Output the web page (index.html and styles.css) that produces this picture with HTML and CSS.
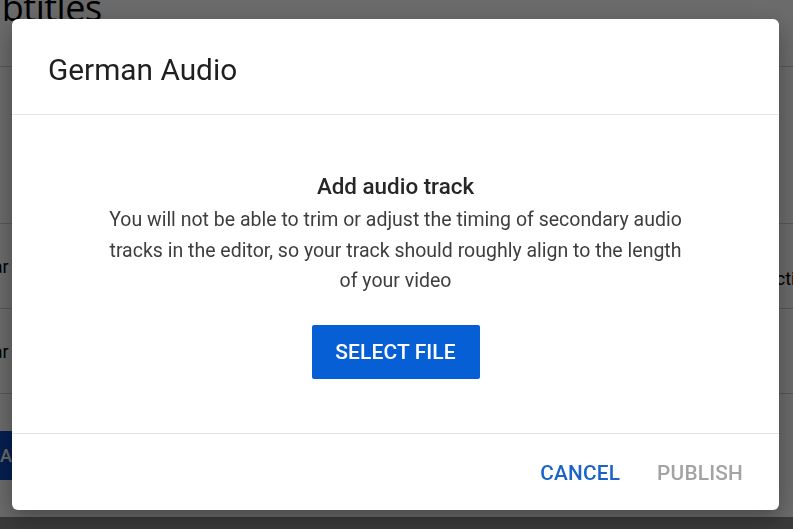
FILE: index.html
```html
<!DOCTYPE html>
<html lang="en">
<head>
<meta charset="utf-8">
<title>German Audio</title>
<link rel="stylesheet" href="styles.css">
</head>
<body>
  <div class="page">
    <h1 class="page-title">Subtitles</h1>
    <div class="table">
      <div class="row row-head"></div>
      <div class="row"><span class="cell-left">Sar</span><span class="cell-right">Actions</span></div>
      <div class="row"><span class="cell-left">Sar</span></div>
      <div class="row row-action"><span class="page-btn">ADD</span></div>
    </div>
    <div class="page-foot"></div>
  </div>

  <div class="scrim">
    <div class="dialog" role="dialog" aria-labelledby="dlg-title">
      <header class="dialog-head">
        <h2 id="dlg-title" class="dialog-title">German Audio</h2>
      </header>
      <section class="dialog-body">
        <h3 class="body-title">Add audio track</h3>
        <p class="body-text">You will not be able to trim or adjust the timing of secondary audio<br>tracks in the editor, so your track should roughly align to the length<br>of your video</p>
        <button class="btn-primary" type="button">SELECT FILE</button>
      </section>
      <footer class="dialog-foot">
        <button class="btn-text btn-cancel" type="button">CANCEL</button>
        <button class="btn-text btn-disabled" type="button" disabled>PUBLISH</button>
      </footer>
    </div>
  </div>
</body>
</html>
```
FILE: styles.css
```css
* { box-sizing: border-box; }

html, body {
  margin: 0;
  height: 100%;
}

body {
  font-family: Roboto, "Liberation Sans", Arial, sans-serif;
  background: #ffffff;
  overflow: hidden;
}

/* underlying page */
.page {
  height: 100%;
  display: flex;
  flex-direction: column;
  background: #ffffff;
  overflow: hidden;
}

.page-title {
  margin: -14px 0 0 -39px;
  font-family: "Open Sans", sans-serif;
  font-weight: 400;
  font-size: 36px;
  line-height: 44px;
  color: #000;
  letter-spacing: -0.5px;
}

.table {
  flex: 1;
  display: flex;
  flex-direction: column;
}

.row {
  border-top: 1px solid #cfcfcf;
  display: flex;
  align-items: center;
  justify-content: space-between;
  height: 85px;
  font-size: 18px;
  color: #000;
}

.row-head {
  margin-top: 36px;
  height: 157px;
}

.cell-left { margin-left: -18px; }
.cell-right { margin-right: -32px; margin-top: 24px; }

.row-action {
  height: 124px;
  align-items: flex-start;
  padding-top: 37px;
}

.page-btn {
  background: #0d47c0;
  color: #fff;
  font-weight: 500;
  padding: 14px 18px;
  margin-left: -18px;
}

.page-foot {
  height: 12px;
  background: #8a8a8a;
}

/* modal scrim and dialog */
.scrim {
  position: fixed;
  inset: 0;
  background: rgba(0, 0, 0, 0.58);
  display: flex;
  align-items: center;
  justify-content: center;
  padding-right: 2px;
}

.dialog {
  width: 767px;
  height: 491px;
  background: #ffffff;
  border-radius: 6px;
  display: flex;
  flex-direction: column;
  box-shadow: 0 8px 24px rgba(0, 0, 0, 0.35);
}

.dialog-head {
  height: 96px;
  border-bottom: 1px solid #e6e6e6;
  display: flex;
  align-items: center;
  padding: 5px 36px 0;
}

.dialog-title {
  margin: 0;
  font-size: 29.8px;
  font-weight: 400;
  color: #1f1f1f;
}

.dialog-body {
  flex: 1;
  display: flex;
  flex-direction: column;
  align-items: center;
  padding-top: 56px;
  border-bottom: 1px solid #e2e2e2;
  text-align: center;
}

.body-title {
  margin: 0;
  font-size: 22.4px;
  line-height: 30px;
  font-weight: 500;
  color: #262626;
}

.body-text {
  margin: 4px 0 0;
  font-size: 19.5px;
  line-height: 30.5px;
  color: #3e3e3e;
}

.btn-primary {
  margin-top: 28px;
  width: 168px;
  height: 54px;
  border: 0;
  border-radius: 2px;
  background: #065fd4;
  color: #ffffff;
  font-family: inherit;
  font-size: 21px;
  font-weight: 500;
  letter-spacing: 0.1px;
}

.dialog-foot {
  height: 76px;
  display: flex;
  align-items: center;
  justify-content: flex-end;
  gap: 37px;
  padding: 2px 36px 0;
}

.btn-text {
  border: 0;
  background: none;
  padding: 0;
  font-family: inherit;
  font-size: 20.8px;
  font-weight: 500;
  letter-spacing: 0.2px;
}

.btn-cancel { color: #1b63c6; }
.btn-disabled { color: #a3a3a3; }
```
